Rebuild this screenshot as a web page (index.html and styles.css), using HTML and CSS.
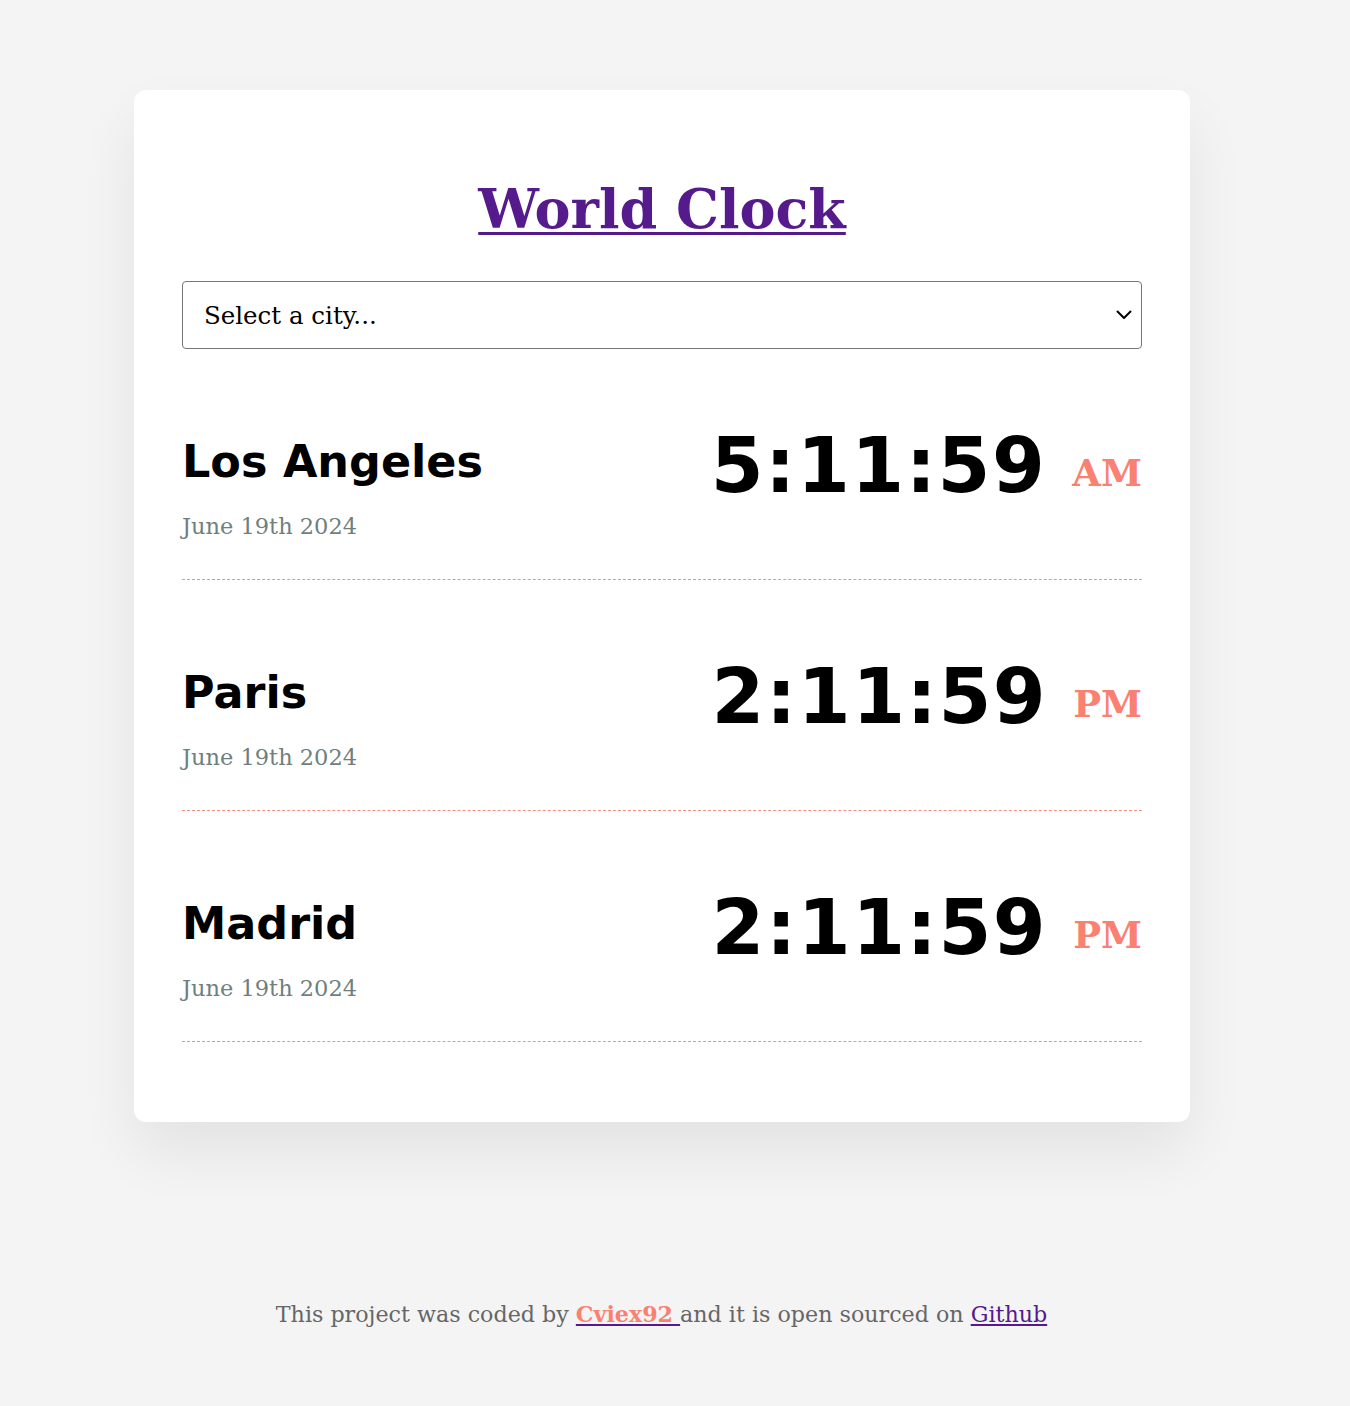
FILE: index.html
```html
<!DOCTYPE html>
<html lang="en">
<head>
<meta charset="utf-8">
<title>World Clock</title>
<link rel="stylesheet" href="styles.css">
</head>
<body>
<div class="container">
  <h1 class="title"><a href="#">World Clock</a></h1>
  <div class="select-wrap">
    <select class="city-select">
      <option>Select a city...</option>
    </select>
    <svg class="chevron" width="16" height="10" viewBox="0 0 16 10" aria-hidden="true"><polyline points="1.5,1.5 8,8 14.5,1.5" fill="none" stroke="#000" stroke-width="2" stroke-linecap="round" stroke-linejoin="round"/></svg>
  </div>
  <div class="cities">
    <div class="city">
      <div class="city-info">
        <h2 class="city-name">Los Angeles</h2>
        <div class="date">June 19th 2024</div>
      </div>
      <div class="time">5:11:59 <small class="ampm">AM</small></div>
    </div>
    <div class="city">
      <div class="city-info">
        <h2 class="city-name">Paris</h2>
        <div class="date">June 19th 2024</div>
      </div>
      <div class="time">2:11:59 <small class="ampm">PM</small></div>
    </div>
    <div class="city">
      <div class="city-info">
        <h2 class="city-name">Madrid</h2>
        <div class="date">June 19th 2024</div>
      </div>
      <div class="time">2:11:59 <small class="ampm">PM</small></div>
    </div>
  </div>
</div>
<footer class="footer">This project was coded by <a class="author" href="#"><strong>Cviex92</strong> </a>and it is open sourced on <a class="repo" href="#">Github</a></footer>
</body>
</html>
```

FILE: styles.css
```css
html, body {
  margin: 0;
  padding: 0;
}
body {
  background: #f4f4f4;
  font-family: "DejaVu Serif", Georgia, serif;
  color: #000;
}
.container {
  width: 960px;
  margin: 90px 0 0 134px;
  padding: 48px 48px 80px;
  background: #fff;
  border-radius: 12px;
  box-shadow: 0 30px 60px rgba(0, 0, 0, 0.07);
}
.title {
  margin: 41px 0 42px;
  text-align: center;
  font-size: 54px;
  line-height: 60px;
  font-weight: bold;
}
.title a {
  color: #551a8b;
  text-decoration: underline;
  text-decoration-thickness: 3px;
  text-underline-offset: 4px;
}
.select-wrap {
  position: relative;
}
.city-select {
  display: block;
  width: 960px;
  height: 68px;
  padding: 0 40px 0 21px;
  font-family: "DejaVu Serif", Georgia, serif;
  font-size: 24.5px;
  color: #000;
  background: #fff;
  border: 1px solid #767676;
  border-radius: 4px;
  appearance: none;
  -webkit-appearance: none;
}
.chevron {
  position: absolute;
  right: 10px;
  top: 29px;
  pointer-events: none;
}
.city {
  display: flex;
  justify-content: space-between;
  align-items: flex-start;
  padding: 72px 0 38px;
  border-bottom: 1px dashed #f4907f;
}
.city-info {
  margin-top: 14px;
}
.city-name {
  margin: 0;
  font-family: "DejaVu Sans", Verdana, sans-serif;
  font-size: 44.5px;
  line-height: 54px;
  font-weight: bold;
}
.date {
  margin-top: 22px;
  font-size: 22.5px;
  line-height: 30px;
  color: #6f7f80;
}
.time {
  font-family: "DejaVu Sans", Verdana, sans-serif;
  font-size: 76px;
  line-height: 90px;
  font-weight: bold;
  letter-spacing: 1.5px;
}
.ampm {
  font-family: "DejaVu Serif", Georgia, serif;
  font-size: 37px;
  font-weight: bold;
  letter-spacing: 0;
  color: #fa8072;
  vertical-align: 6px;
  margin-left: -2px;
}
.footer {
  margin: 179px 0 0;
  padding-bottom: 60px;
  padding-right: 27px;
  text-align: center;
  font-size: 22.2px;
  color: #666;
}
.footer a {
  color: #551a8b;
}
.footer .author strong {
  color: #fa8072;
}
```
